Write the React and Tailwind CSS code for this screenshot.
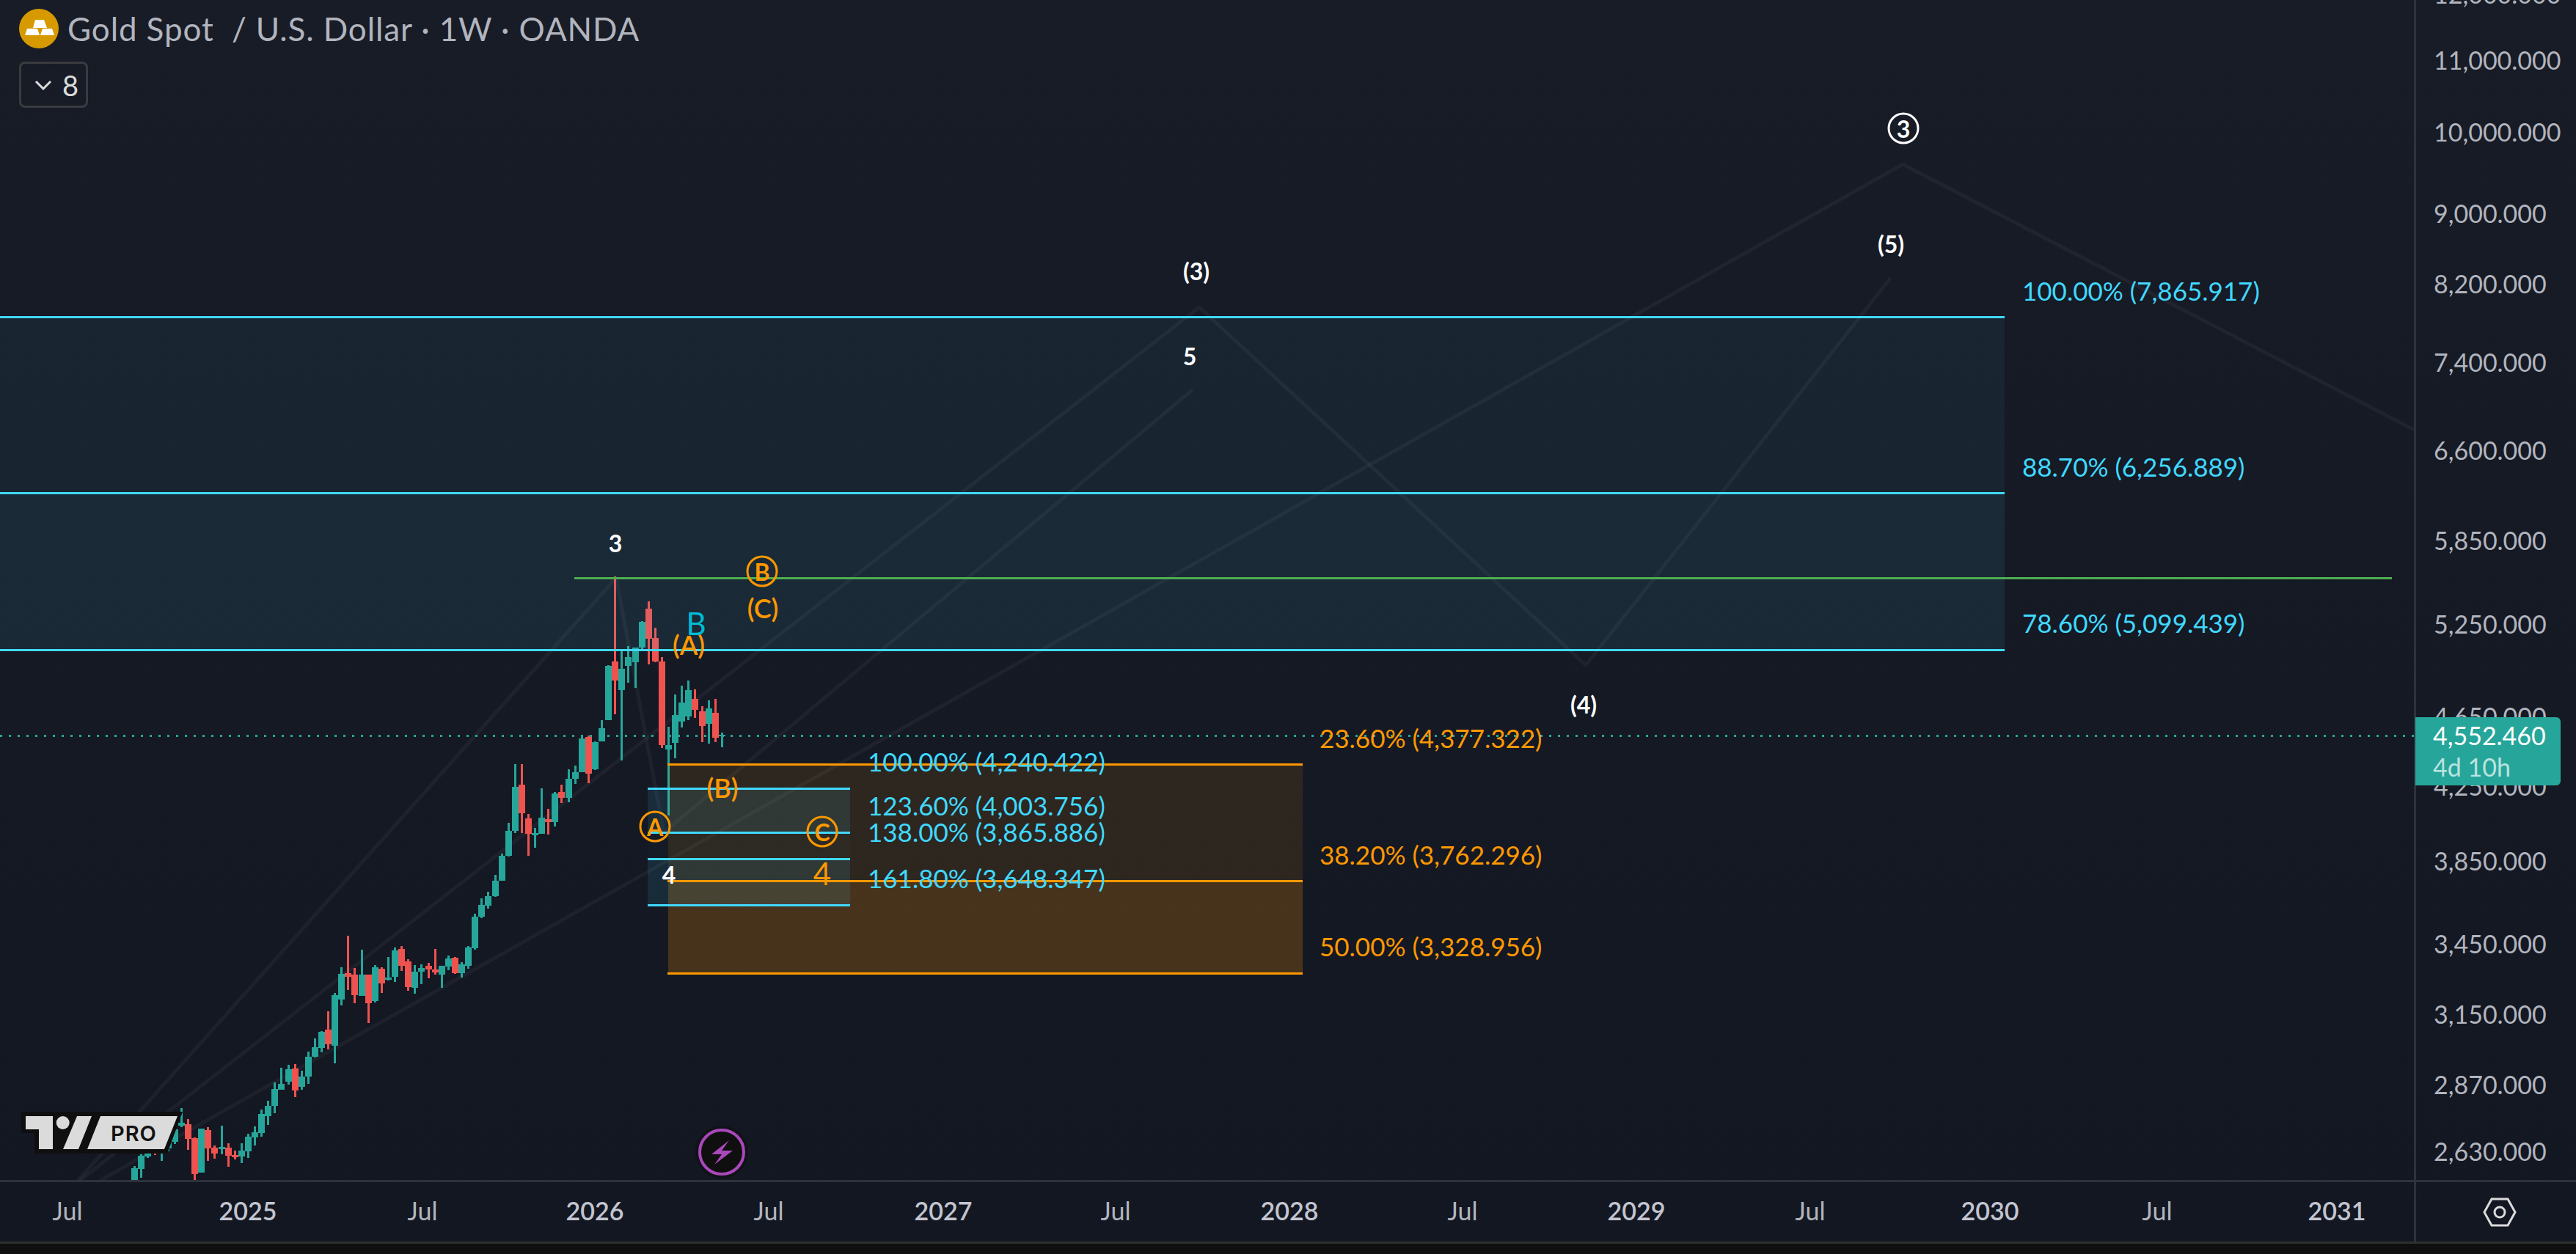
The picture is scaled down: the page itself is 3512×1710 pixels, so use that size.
import React from 'react'

// [type, bodyTop, bodyBottom, wickTop, wickBottom], values are 3x offsets from the group's base y
const group1 = [
    ['g', 579, 627, 570, 630], ['g', 528, 582, 522, 618], ['g', 519, 531, 505, 537], ['r', 500, 519, 490, 525],
    ['g', 480, 520, 470, 549], ['g', 470, 498, 460, 510], ['g', 420, 470, 400, 480], ['g', 393, 405, 333, 410],
    ['r', 399, 459, 378, 504], ['r', 456, 603, 453, 630], ['g', 417, 597, 417, 597], ['r', 423, 498, 411, 549],
    ['r', 495, 519, 486, 540], ['g', 492, 501, 405, 522], ['r', 495, 528, 477, 573], ['r', 525, 534, 507, 543],
    ['g', 507, 531, 477, 558], ['g', 450, 510, 438, 537], ['g', 432, 453, 408, 486], ['g', 357, 435, 339, 450],
    ['g', 324, 366, 303, 402], ['g', 255, 324, 228, 354], ['g', 234, 258, 168, 258], ['g', 174, 225, 156, 237],
    ['r', 171, 261, 153, 288], ['g', 204, 246, 180, 258], ['g', 123, 204, 102, 234], ['g', 84, 123, 48, 126],
]
const group2 = [
    ['g', 771, 837, 768, 855], ['r', 762, 822, 687, 843], ['g', 621, 828, 612, 900], ['g', 534, 639, 507, 663],
    ['r', 531, 546, 378, 600], ['r', 537, 621, 510, 654], ['g', 537, 624, 435, 624], ['r', 537, 654, 537, 735],
    ['g', 507, 645, 498, 651], ['r', 513, 573, 507, 612], ['g', 549, 558, 465, 561], ['g', 438, 546, 426, 567],
    ['r', 432, 501, 420, 522], ['r', 483, 588, 474, 603], ['g', 525, 591, 498, 615], ['g', 510, 525, 495, 576],
    ['r', 501, 516, 489, 552], ['r', 516, 528, 432, 537], ['g', 501, 537, 501, 591], ['g', 471, 504, 459, 519],
    ['r', 468, 531, 465, 534], ['g', 495, 531, 486, 549], ['g', 426, 501, 420, 513], ['g', 300, 429, 288, 435],
    ['g', 252, 300, 225, 306], ['g', 216, 255, 198, 267], ['g', 153, 216, 129, 219], ['g', 51, 153, 42, 153],
    ['g', -51, 51, -84, 54],
]
const group3 = [
    ['g', 1059, 1239, 966, 1248], ['r', 1050, 1167, 966, 1248], ['r', 1187, 1251, 1170, 1341], ['g', 1248, 1257, 1227, 1308],
    ['g', 1185, 1251, 1065, 1251], ['r', 1191, 1203, 1149, 1254], ['g', 1086, 1203, 1080, 1221], ['r', 1080, 1104, 1050, 1125],
    ['g', 1026, 1104, 987, 1122], ['g', 999, 1026, 972, 1047], ['g', 861, 999, 849, 999], ['r', 855, 1005, 849, 1044],
    ['g', 876, 987, 873, 990], ['g', 819, 873, 786, 873], ['g', 564, 786, 561, 786], ['r', 546, 624, 198, 762],
    ['g', 576, 663, 498, 951], ['g', 528, 564, 483, 633], ['g', 489, 549, 489, 654], ['g', 384, 488, 381, 498],
    ['r', 330, 453, 300, 558], ['r', 450, 546, 408, 549], ['r', 546, 888, 528, 900], ['g', 888, 906, 813, 1176],
    ['g', 765, 879, 681, 942], ['g', 714, 792, 645, 816], ['g', 663, 771, 624, 786], ['r', 699, 744, 660, 777],
    ['r', 750, 810, 729, 876], ['g', 738, 801, 705, 882], ['r', 756, 858, 699, 876], ['g', 846, 852, 837, 897],
]

const candles = [
    ...group1.map((c) => [c, 1400]),
    ...group2.map((c) => [c, 1150]),
    ...group3.map((c) => [c, 720]),
].map(([c, base], i) => ({
    color: c[0] === 'g' ? '#26a69a' : '#ef5350',
    x: Math.round(420.3 + 9.097 * (i - 26) - 4.5),
    top: Math.round(base + c[1] / 3),
    bottom: Math.round(base + c[2] / 3),
    wickTop: Math.round(base + c[3] / 3),
    wickBottom: Math.round(base + c[4] / 3),
}))

const waveLines = [
    [107, 1609, 840, 788, 905, 1135, 1624, 533],
    [110, 1609, 1635, 419, 2162, 907, 2576, 381],
    [138, 1609, 2594, 224, 3293, 587],
]

const priceLabels = [
    ['12,000.000', -8], ['11,000.000', 82], ['10,000.000', 180], ['9,000.000', 291], ['8,200.000', 387],
    ['7,400.000', 494], ['6,600.000', 614], ['5,850.000', 737], ['5,250.000', 851], ['4,650.000', 977],
    ['4,250.000', 1072], ['3,850.000', 1174], ['3,450.000', 1287], ['3,150.000', 1383], ['2,870.000', 1479],
    ['2,630.000', 1570],
]

const timeLabels = [
    ['Jul', 92], ['2025', 338], ['Jul', 576], ['2026', 811], ['Jul', 1048], ['2027', 1286], ['Jul', 1521],
    ['2028', 1758], ['Jul', 1994], ['2029', 2231], ['Jul', 2468], ['2030', 2713], ['Jul', 2941], ['2031', 3186],
]

const cyanBig = [
    ['100.00% (7,865.917)', 396],
    ['88.70% (6,256.889)', 636],
    ['78.60% (5,099.439)', 849],
]
const cyanSmall = [
    ['100.00% (4,240.422)', 1038],
    ['123.60% (4,003.756)', 1098],
    ['138.00% (3,865.886)', 1134],
    ['161.80% (3,648.347)', 1197],
]
const orangeLabels = [
    ['23.60% (4,377.322)', 1006],
    ['38.20% (3,762.296)', 1165],
    ['50.00% (3,328.956)', 1290],
]

const Mark = ({ x, y, className, children }) => (
    <div
        className={`absolute -translate-x-1/2 -translate-y-1/2 whitespace-nowrap leading-none ${className}`}
        style={{ left: x, top: y }}
    >
        {children}
    </div>
)

const Circled = ({ x, y, color, children }) => (
    <Mark x={x} y={y} className={`flex h-[43px] w-[43px] items-center justify-center rounded-full border-[3px] text-[32px] font-bold ${color}`}>
        {children}
    </Mark>
)

const FibLabel = ({ x, y, className, children }) => (
    <div
        className={`absolute -translate-y-1/2 whitespace-nowrap text-[35px] leading-none ${className}`}
        style={{ left: x, top: y }}
    >
        {children}
    </div>
)

const ChartDrawing = () => (
    <svg className="absolute inset-0 h-full w-full" viewBox="0 0 3291 1609">
        {waveLines.map((points, i) => (
            <polyline key={i} points={points.join(' ')} fill="none" stroke="#ffffff" strokeOpacity="0.045" strokeWidth="5" strokeLinecap="round" strokeLinejoin="round" />
        ))}
        <line x1="0" y1="1003.5" x2="3291" y2="1003.5" stroke="#26a69a" strokeWidth="3" strokeDasharray="3 9" />
        <g shapeRendering="crispEdges">
            {candles.map((c, i) => (
                <g key={i} fill={c.color}>
                    <rect x={c.x + 3} y={c.wickTop} width="3" height={Math.max(c.wickBottom - c.wickTop, 1)} />
                    <rect x={c.x} y={c.top} width="9" height={Math.max(c.bottom - c.top, 2)} />
                </g>
            ))}
            {/* big cyan fib */}
            <rect x="0" y="432" width="2733" height="240" fill="#40d9ff" fillOpacity="0.055" />
            <rect x="0" y="672" width="2733" height="214" fill="#40d9ff" fillOpacity="0.085" />
            {/* orange fib */}
            <rect x="911" y="1042" width="865" height="159" fill="#ff9800" fillOpacity="0.11" />
            <rect x="911" y="1201" width="865" height="126" fill="#ff9800" fillOpacity="0.22" />
            {/* small cyan fib */}
            <rect x="883" y="1075" width="276" height="60" fill="#40d9ff" fillOpacity="0.1" />
            <rect x="883" y="1135" width="276" height="36" fill="#40d9ff" fillOpacity="0.02" />
            <rect x="883" y="1171" width="276" height="63" fill="#40d9ff" fillOpacity="0.1" />
            <g fill="#40d9ff">
                <rect x="0" y="431" width="2733" height="3" />
                <rect x="0" y="671" width="2733" height="3" />
                <rect x="0" y="885" width="2733" height="3" />
                <rect x="883" y="1074" width="276" height="3" />
                <rect x="883" y="1134" width="276" height="3" />
                <rect x="883" y="1170" width="276" height="3" />
                <rect x="883" y="1233" width="276" height="3" />
            </g>
            <g fill="#ff9800">
                <rect x="910" y="1041" width="866" height="3" />
                <rect x="910" y="1200" width="866" height="3" />
                <rect x="910" y="1326" width="866" height="3" />
            </g>
            <rect x="783" y="787" width="2478" height="3" fill="#4caf50" />
        </g>
    </svg>
)

const ProLogo = () => (
    <div className="absolute left-[29px] top-[1516px] h-[58px] w-[221px]">
        <svg className="absolute inset-0 h-full w-full" viewBox="29 1516 221 58">
            <path d="M29 1516H76Q86 1512 96 1516H249L228 1573H47V1545H29Z" fill="#0f0f0f" />
            <path d="M35 1522H72V1567H53V1540H35Z" fill="#dbdbdb" />
            <circle cx="85.7" cy="1531" r="9" fill="#dbdbdb" />
            <path d="M105 1522H125L107 1567H86Z" fill="#dbdbdb" />
            <path d="M137 1522H242L224 1567H119Z" fill="#dbdbdb" />
        </svg>
        <div className="absolute left-[122px] top-[15px] font-['Inter',sans-serif] text-[29px] font-semibold leading-[29px] tracking-[1px] text-[#131313]">PRO</div>
    </div>
)

const Legend = () => (
    <div className="absolute left-[26px] top-[12px] flex flex-col items-start gap-[18px]">
        <div className="flex items-center gap-[12px]">
            <svg width="54" height="54" viewBox="0 0 54 54">
                <circle cx="27" cy="27" r="27" fill="#d69a00" />
                <path d="M19 26L22 15H34L38 26Z M8 36L11 27H25L28 36Z M29 36L32 27H45L48 36Z" fill="#ffffff" />
            </svg>
            <div className="whitespace-pre text-[44px] leading-none tracking-[0.9px] text-[#b2b5be]">Gold Spot  / U.S. Dollar · 1W · OANDA</div>
        </div>
        <div className="flex h-[63px] w-[94px] items-center gap-[14px] rounded-[8px] border-[3px] border-[#3a3b3e] pl-[18px] text-[#dbdbdb]">
            <svg width="24" height="14" viewBox="0 0 24 14" fill="none" stroke="currentColor" strokeWidth="3">
                <path d="M2 2L12 12L22 2" />
            </svg>
            <span className="text-[38px] leading-none">8</span>
        </div>
    </div>
)

const App = () => {
    return (
        <div className="flex h-[1710px] w-[3512px] flex-col overflow-hidden bg-gradient-to-b from-[#181c27] to-[#131722] font-['Lato',sans-serif]">
            <div className="flex h-[1609px]">
                <div className="relative w-[3291px] overflow-hidden">
                    <ChartDrawing />
                    <Legend />

                    {/* wave counts */}
                    <Mark x={839} y={741} className="text-[32px] font-bold text-white">3</Mark>
                    <Mark x={1622} y={486} className="text-[32px] font-bold text-white">5</Mark>
                    <Mark x={912} y={1193} className="text-[32px] font-bold text-white">4</Mark>
                    <Mark x={1631} y={370} className="text-[32px] font-bold text-white">(3)</Mark>
                    <Mark x={2159} y={961} className="text-[32px] font-bold text-white">(4)</Mark>
                    <Mark x={2578} y={333} className="text-[32px] font-bold text-white">(5)</Mark>
                    <Circled x={2595} y={175} color="border-white text-white">3</Circled>

                    <Circled x={1039} y={779} color="border-[#ff9800] text-[#ff9800]">B</Circled>
                    <Circled x={893} y={1127} color="border-[#ff9800] text-[#ff9800]">A</Circled>
                    <Circled x={1121} y={1134} color="border-[#ff9800] text-[#ff9800]">C</Circled>
                    <Mark x={1040} y={829} className="text-[36px] font-semibold text-[#ff9800]">(C)</Mark>
                    <Mark x={939} y={879} className="text-[36px] font-semibold text-[#ff9800]">(A)</Mark>
                    <Mark x={985} y={1074} className="text-[36px] font-semibold text-[#ff9800]">(B)</Mark>
                    <Mark x={949} y={850} className="text-[42px] text-[#00bcd4]">B</Mark>
                    <Mark x={1121} y={1191} className="text-[42px] text-[#ff9800]">4</Mark>

                    {/* fib levels */}
                    {cyanBig.map(([text, y]) => (
                        <FibLabel key={text} x={2757} y={y} className="text-[#40d9ff]">{text}</FibLabel>
                    ))}
                    {cyanSmall.map(([text, y]) => (
                        <FibLabel key={text} x={1183} y={y} className="text-[#40d9ff]">{text}</FibLabel>
                    ))}
                    {orangeLabels.map(([text, y]) => (
                        <FibLabel key={text} x={1799} y={y} className="text-[#ff9800]">{text}</FibLabel>
                    ))}

                    <ProLogo />

                    {/* lightning badge */}
                    <svg className="absolute left-[948px] top-[1535px]" width="72" height="72" viewBox="948 1535 72 72">
                        <circle cx="984" cy="1571" r="36" fill="#0f0f0f" fillOpacity="0.6" />
                        <circle cx="984" cy="1571" r="30" fill="#0f0f0f" stroke="#ab47bc" strokeWidth="4" />
                        <path d="M994 1555L970 1574H984L974 1588L999 1569H984Z" fill="#ab47bc" />
                    </svg>
                </div>

                {/* price axis */}
                <div className="relative w-[221px] border-l-[3px] border-[#2e323d]">
                    {priceLabels.map(([text, y]) => (
                        <div key={text} className="absolute left-[24px] -translate-y-1/2 text-[34px] leading-none text-[#b2b5be]" style={{ top: y }}>
                            {text}
                        </div>
                    ))}
                    <div className="absolute left-[-1px] top-[978px] flex h-[93px] w-[198px] flex-col justify-center gap-[9px] rounded-r-[6px] bg-[#26a69a] pl-[24px] text-[34px] leading-none">
                        <span className="text-white">4,552.460</span>
                        <span className="text-white/70">4d 10h</span>
                    </div>
                </div>
            </div>

            {/* time axis */}
            <div className="flex h-[84px] border-t-[3px] border-[#2e323d]">
                <div className="relative w-[3291px]">
                    {timeLabels.map(([text, x]) => (
                        <Mark key={x} x={x} y={39} className={`text-[34px] ${text === 'Jul' ? 'text-[#b2b5be]' : 'font-semibold text-[#c3c5d0]'}`}>
                            {text}
                        </Mark>
                    ))}
                </div>
                <div className="flex w-[221px] items-center justify-center border-l-[3px] border-[#2e323d] pl-[10px]">
                    <svg width="46" height="40" viewBox="0 0 46 40" fill="none" stroke="#dbdbdb" strokeWidth="3">
                        <path d="M2 20L12 2H34L44 20L34 38H12Z" />
                        <circle cx="23" cy="20" r="7" />
                    </svg>
                </div>
            </div>

            <div className="flex-1 border-t-[3px] border-[#2f2f2f] bg-[#0f0f0f]" />
        </div>
    )
}

export default App
